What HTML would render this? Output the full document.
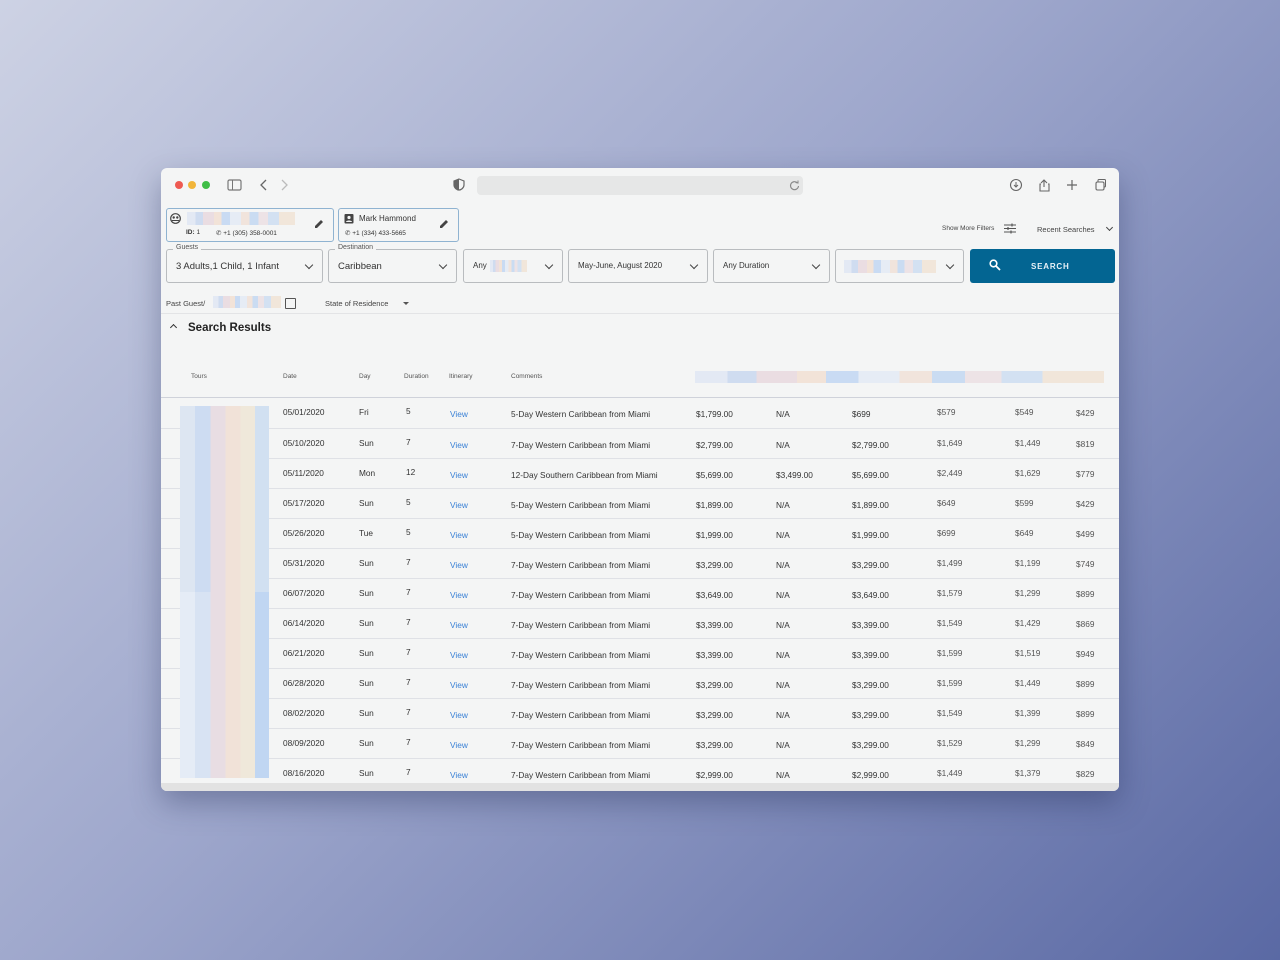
<!DOCTYPE html><html><head><style>
*{margin:0;padding:0;box-sizing:border-box}
body{width:1280px;height:960px;overflow:hidden;background:linear-gradient(135deg,#cdd2e4 0%,#9ea7cc 45%,#5a69a4 100%);font-family:"Liberation Sans",sans-serif;position:relative;color:#333}
.win{position:absolute;left:161px;top:168px;width:958px;height:623px;background:#f4f5f5;border-radius:6px;overflow:hidden;box-shadow:0 12px 30px rgba(30,40,80,.35)}
.a{position:absolute;white-space:nowrap}
.box{position:absolute;border:1px solid #b9bcbf;border-radius:3px;height:34px;top:81px;background:#f4f5f5}
.box span{position:absolute;left:9px;top:11px;font-size:9.5px;color:#333}
.chev{position:absolute;right:10px;top:12px;width:6px;height:6px;border-right:1.3px solid #444;border-bottom:1.3px solid #444;transform:rotate(45deg)}
.lbl{position:absolute;top:-6px;left:6px;background:#f4f5f5;padding:0 3px;font-size:7px;color:#555}
.pix{background:linear-gradient(90deg,#e3e9f4 0 8%,#cfdcf0 8% 15%,#eadde2 15% 25%,#f2e3d8 25% 32%,#c9dbf3 32% 40%,#e6ecf5 40% 50%,#f1e4dc 50% 58%,#cadcf2 58% 66%,#ede3e6 66% 75%,#d3e1f2 75% 85%,#f1e6da 85% 100%)}
.row{position:absolute;left:0;width:958px;height:30px;border-top:1px solid #dfe1e6;font-size:8.3px;color:#333}
.row div{position:absolute;top:10px}
.hd{position:absolute;top:205px;font-size:6.5px;color:#555}
</style></head><body>
<div class="win">
<!-- toolbar -->
<div class="a" style="left:14px;top:13px;width:8px;height:8px;border-radius:50%;background:#ee5a52"></div>
<div class="a" style="left:27px;top:13px;width:8px;height:8px;border-radius:50%;background:#f1b53a"></div>
<div class="a" style="left:41px;top:13px;width:8px;height:8px;border-radius:50%;background:#3fbe47"></div>
<svg class="a" style="left:66px;top:11px" width="15" height="12"><rect x="1" y="1" width="13" height="10" rx="1.5" fill="none" stroke="#777" stroke-width="1.2"/><line x1="5.5" y1="1" x2="5.5" y2="11" stroke="#777"/></svg>
<svg class="a" style="left:97px;top:10px" width="35" height="14"><path d="M8 2 L3 7 L8 12" fill="none" stroke="#666" stroke-width="1.3"/><path d="M24 2 L29 7 L24 12" fill="none" stroke="#bbb" stroke-width="1.3"/></svg>
<svg class="a" style="left:292px;top:10px" width="12" height="13"><path d="M6 1 L11 3 L11 7 C11 10 8 12 6 12 C4 12 1 10 1 7 L1 3 Z" fill="none" stroke="#666" stroke-width="1.2"/><path d="M6 1 L6 12 C4 12 1 10 1 7 L1 3Z" fill="#666"/></svg>
<div class="a" style="left:316px;top:8px;width:326px;height:19px;background:#e6e7e7;border-radius:4px"></div>
<svg class="a" style="left:628px;top:12px" width="11" height="11"><path d="M8.5 3 A4 4 0 1 0 9.5 6" fill="none" stroke="#888" stroke-width="1.1"/><path d="M6.5 2.5 L9 3 L9 0.5" fill="none" stroke="#888"/></svg>
<svg class="a" style="left:848px;top:10px" width="100" height="14"><circle cx="7" cy="7" r="5.5" fill="none" stroke="#666" stroke-width="1.1"/><path d="M7 4v5M5 7l2 2 2-2" fill="none" stroke="#666"/><path d="M32 5 L35 2 L38 5M35 2v7M32 6h-1v7h9v-7h-1" fill="none" stroke="#666" stroke-width="1.1"/><path d="M63 2v10M58 7h10" stroke="#666" stroke-width="1.2"/><rect x="87" y="4" width="8" height="8" rx="1.5" fill="none" stroke="#666" stroke-width="1.1"/><path d="M89 4V2.5a1 1 0 0 1 1-1h5.5a1 1 0 0 1 1 1V8a1 1 0 0 1-1 1H95" fill="none" stroke="#666"/></svg>

<!-- contact cards -->
<div class="a" style="left:5px;top:40px;width:168px;height:34px;border:1px solid #8fb3d1;border-radius:3px"></div>
<svg class="a" style="left:9px;top:45px" width="11" height="11"><circle cx="5.5" cy="5.5" r="4.8" fill="none" stroke="#444" stroke-width="1.2"/><circle cx="3.7" cy="4.5" r="1.2" fill="#444"/><circle cx="7.3" cy="4.5" r="1.2" fill="#444"/><path d="M2 7.5h7" stroke="#444"/></svg>
<div class="a pix" style="left:26px;top:44px;width:108px;height:13px"></div>
<div class="a" style="left:25px;top:61px;font-size:6.5px;color:#333"><b>ID:</b> 1</div>
<div class="a" style="left:55px;top:61px;font-size:6.5px;color:#333">&#9990; +1 (305) 358-0001</div>
<svg class="a" style="left:152px;top:50px" width="12" height="12"><path d="M2 10 L2 8 L8 2 L10 4 L4 10Z" fill="#444"/></svg>
<div class="a" style="left:177px;top:40px;width:121px;height:34px;border:1px solid #8fb3d1;border-radius:3px"></div>
<svg class="a" style="left:183px;top:45px" width="10" height="11"><rect x="0.5" y="1" width="9" height="9.5" rx="1" fill="#444"/><circle cx="5" cy="4.5" r="1.6" fill="#f4f5f5"/><path d="M2 9c0-2 6-2 6 0" fill="#f4f5f5"/></svg>
<div class="a" style="left:198px;top:46px;font-size:8px;color:#333">Mark Hammond</div>
<div class="a" style="left:184px;top:61px;font-size:6.5px;color:#333">&#9990; +1 (334) 433-5665</div>
<svg class="a" style="left:277px;top:50px" width="12" height="12"><path d="M2 10 L2 8 L8 2 L10 4 L4 10Z" fill="#444"/></svg>

<div class="a" style="left:781px;top:57px;font-size:6.5px;color:#444">Show More Filters</div>
<svg class="a" style="left:843px;top:55px" width="12" height="11"><path d="M0 2h12M0 5.5h12M0 9h12" stroke="#555" stroke-width="1"/><path d="M8 0.5v3M4 4v3M7 7.5v3" stroke="#555" stroke-width="1.2"/></svg>
<div class="a" style="left:876px;top:57px;font-size:7.5px;color:#444">Recent Searches</div>
<div class="a" style="left:946px;top:57px;width:5px;height:5px;border-right:1.2px solid #444;border-bottom:1.2px solid #444;transform:rotate(45deg)"></div>

<!-- filters -->
<div class="box" style="left:5px;width:157px"><div class="lbl">Guests</div><span>3 Adults,1 Child, 1 Infant</span><div class="chev"></div></div>
<div class="box" style="left:167px;width:129px"><div class="lbl">Destination</div><span>Caribbean</span><div class="chev"></div></div>
<div class="box" style="left:302px;width:100px"><span style="font-size:8px">Any</span><div class="pix" style="position:absolute;left:26px;top:10px;width:37px;height:12px"></div><div class="chev"></div></div>
<div class="box" style="left:407px;width:140px"><span style="font-size:8px">May-June, August 2020</span><div class="chev"></div></div>
<div class="box" style="left:552px;width:117px"><span style="font-size:8px">Any Duration</span><div class="chev"></div></div>
<div class="box" style="left:674px;width:129px"><div class="pix" style="position:absolute;left:8px;top:10px;width:92px;height:13px"></div><div class="chev"></div></div>
<div class="a" style="left:809px;top:81px;width:145px;height:34px;background:#036592;border-radius:3px"></div>
<svg class="a" style="left:828px;top:91px" width="12" height="12"><circle cx="4.5" cy="4.5" r="3.3" fill="none" stroke="#fff" stroke-width="1.6"/><path d="M7 7l4 4" stroke="#fff" stroke-width="1.8"/></svg>
<div class="a" style="left:870px;top:94px;font-size:8px;font-weight:bold;letter-spacing:.8px;color:#e8f1f7">SEARCH</div>

<div class="a" style="left:5px;top:131px;font-size:7.5px;color:#444">Past Guest/</div>
<div class="a pix" style="left:52px;top:128px;width:68px;height:12px"></div>
<div class="a" style="left:124px;top:130px;width:11px;height:11px;border:1.3px solid #555;border-radius:1px"></div>
<div class="a" style="left:164px;top:131px;font-size:7.5px;color:#444">State of Residence</div>
<div class="a" style="left:242px;top:134px;border-left:3px solid transparent;border-right:3px solid transparent;border-top:3px solid #555"></div>
<div class="a" style="left:0;top:145px;width:958px;height:1px;background:#e3e4e6"></div>

<div class="a" style="left:10px;top:157px;width:5px;height:5px;border-left:1.3px solid #333;border-top:1.3px solid #333;transform:rotate(45deg)"></div>
<div class="a" style="left:27px;top:154px;font-size:11.5px;font-weight:bold;color:#222">Search Results</div>

<div class="hd" style="left:30px">Tours</div>
<div class="hd" style="left:122px">Date</div>
<div class="hd" style="left:198px">Day</div>
<div class="hd" style="left:243px">Duration</div>
<div class="hd" style="left:288px">Itinerary</div>
<div class="hd" style="left:350px">Comments</div>
<div class="a pix" style="left:534px;top:203px;width:409px;height:12px"></div>
<div class="a" style="left:0;top:229px;width:958px;height:1px;background:#cfd2da"></div>

<div id="rows"></div>
<div class="a" style="left:0;top:615px;width:958px;height:8px;background:#e2e2e2"></div>
<!-- tour block -->
<div class="a" style="left:19px;top:238px;width:89px;height:372px;background:linear-gradient(90deg,#dde6f2 0 17%,#cddcf2 17% 34%,#e8dde3 34% 51%,#f1e2d8 51% 68%,#efe8da 68% 84%,#d1e0f1 84%)"></div>
<div class="a" style="left:19px;top:424px;width:89px;height:186px;background:linear-gradient(90deg,#e5ecf6 0 17%,#d8e3f3 17% 34%,#e8dde3 34% 51%,#f1e2d8 51% 68%,#efe8da 68% 84%,#c0d6f2 84%)"></div>
</div>
<script>
var d=[["05/01/2020","Fri","5","5-Day Western Caribbean from Miami","$1,799.00","N/A","$699","$579","$549","$429"],
["05/10/2020","Sun","7","7-Day Western Caribbean from Miami","$2,799.00","N/A","$2,799.00","$1,649","$1,449","$819"],
["05/11/2020","Mon","12","12-Day Southern Caribbean from Miami","$5,699.00","$3,499.00","$5,699.00","$2,449","$1,629","$779"],
["05/17/2020","Sun","5","5-Day Western Caribbean from Miami","$1,899.00","N/A","$1,899.00","$649","$599","$429"],
["05/26/2020","Tue","5","5-Day Western Caribbean from Miami","$1,999.00","N/A","$1,999.00","$699","$649","$499"],
["05/31/2020","Sun","7","7-Day Western Caribbean from Miami","$3,299.00","N/A","$3,299.00","$1,499","$1,199","$749"],
["06/07/2020","Sun","7","7-Day Western Caribbean from Miami","$3,649.00","N/A","$3,649.00","$1,579","$1,299","$899"],
["06/14/2020","Sun","7","7-Day Western Caribbean from Miami","$3,399.00","N/A","$3,399.00","$1,549","$1,429","$869"],
["06/21/2020","Sun","7","7-Day Western Caribbean from Miami","$3,399.00","N/A","$3,399.00","$1,599","$1,519","$949"],
["06/28/2020","Sun","7","7-Day Western Caribbean from Miami","$3,299.00","N/A","$3,299.00","$1,599","$1,449","$899"],
["08/02/2020","Sun","7","7-Day Western Caribbean from Miami","$3,299.00","N/A","$3,299.00","$1,549","$1,399","$899"],
["08/09/2020","Sun","7","7-Day Western Caribbean from Miami","$3,299.00","N/A","$3,299.00","$1,529","$1,299","$849"],
["08/16/2020","Sun","7","7-Day Western Caribbean from Miami","$2,999.00","N/A","$2,999.00","$1,449","$1,379","$829"]];
var h="";d.forEach(function(r,i){var t=230+i*30;if(i==0)t=230;
h+='<div class="row" style="top:'+t+'px;'+(i==0?'border-top:none':'')+'">'+
'<div style="left:122px;top:9px">'+r[0]+'</div><div style="left:198px;top:9px">'+r[1]+'</div><div style="left:245px;top:8px">'+r[2]+'</div>'+
'<div style="left:289px;top:11px;color:#3b82d6">View</div><div style="left:350px;top:11px">'+r[3]+'</div>'+
'<div style="left:535px;top:11px">'+r[4]+'</div><div style="left:615px;top:11px">'+r[5]+'</div><div style="left:691px;top:11px">'+r[6]+'</div>'+
'<div style="left:776px;top:9px;color:#555">'+r[7]+'</div><div style="left:854px;top:9px;color:#555">'+r[8]+'</div><div style="left:915px;top:10px;color:#555">'+r[9]+'</div></div>';});
document.getElementById("rows").outerHTML=h;
</script>
</body></html>
